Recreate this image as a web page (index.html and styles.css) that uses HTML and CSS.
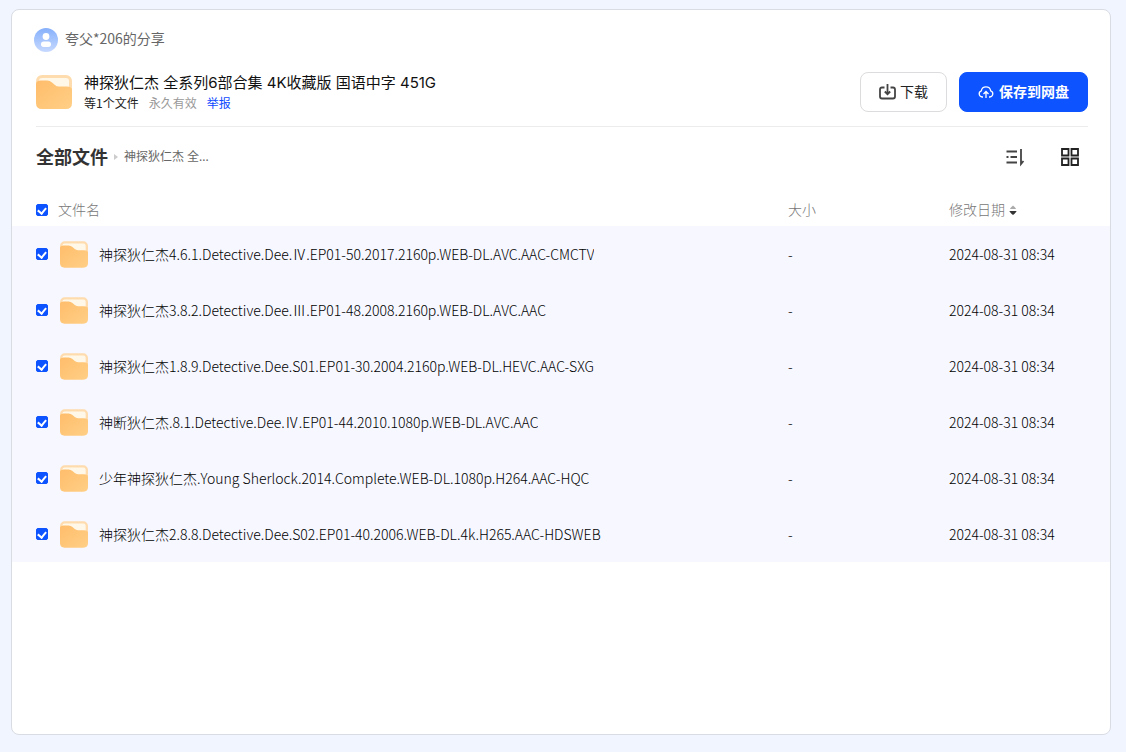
FILE: index.html
```html
<!DOCTYPE html>
<html lang="zh-CN">
<head>
<meta charset="utf-8">
<meta name="viewport" content="width=device-width, initial-scale=1">
<title>神探狄仁杰 全系列6部合集</title>
<link rel="stylesheet" href="styles.css">
</head>
<body>
<svg class="defs" width="0" height="0" aria-hidden="true">
  <defs>
    <linearGradient id="folder-front" x1="0" y1="0" x2="1" y2="1">
      <stop offset="0" stop-color="#ffbd6b"/>
      <stop offset="1" stop-color="#ffcf86"/>
    </linearGradient>
    <linearGradient id="avatar-fill" x1="0" y1="0" x2="0" y2="1">
      <stop offset="0" stop-color="#86b0fb"/>
      <stop offset="1" stop-color="#c6d9ff"/>
    </linearGradient>
    <symbol id="folder" viewBox="0 0 36 34">
      <rect width="36" height="30" rx="6" fill="#ffdcae"/>
      <rect x="3" y="3" width="30" height="18" rx="3" fill="#fff7e8"/>
      <path d="M0 9Q0 5.500 5 5.500H11Q14 5.500 16 7.500L19 10Q20.500 11.500 23 11.500H31Q36 11.500 36 15V28Q36 34 30 34H6Q0 34 0 28Z" fill="url(#folder-front)"/>
    </symbol>
  </defs>
</svg>
<main class="card">
  <header class="head">
    <div class="owner">
      <svg class="avatar" viewBox="0 0 24 24" aria-hidden="true">
        <circle cx="12" cy="12" r="12" fill="url(#avatar-fill)"/>
        <circle cx="12" cy="8.500" r="3.400" fill="#fff"/>
        <rect x="7" y="13.500" width="10" height="5.500" rx="2.700" fill="#fff"/>
      </svg>
      <span class="owner-name">夸父*206的分享</span>
    </div>
    <div class="share">
      <svg class="share-icon" aria-hidden="true"><use href="#folder"/></svg>
      <div class="share-info">
        <h1 class="title">神探狄仁杰 全系列6部合集 4K收藏版 国语中字 451G</h1>
        <p class="meta"><span>等1个文件</span><span class="muted">永久有效</span><a class="report" href="#">举报</a></p>
      </div>
      <div class="actions">
        <button class="btn" type="button">
          <svg width="17" height="18" viewBox="0 0 17 18" fill="none" stroke="#444" stroke-width="1.800" aria-hidden="true"><path d="M5.500 4.500H3Q1 4.500 1 6.500V13.500Q1 15.500 3 15.500H14Q16 15.500 16 13.500V6.500Q16 4.500 14 4.500H11.500M8.500 1V11M5.800 8.500L8.500 11.200L11.200 8.500"/></svg>
          下载
        </button>
        <button class="btn primary" type="button">
          <svg width="16" height="16" viewBox="0 0 16 16" fill="none" stroke="#fff" stroke-width="1.300" aria-hidden="true"><path d="M5 13H4.200A3.200 3.200 0 0 1 3.300 6.800A4.800 4.800 0 0 1 12.700 6.800A3.200 3.200 0 0 1 11.800 13H11M8 14V7.800M5.500 10L8 7.500L10.500 10"/></svg>
          保存到网盘
        </button>
      </div>
    </div>
  </header>
  <div class="toolbar">
    <nav class="crumbs">
      <a class="crumb-root" href="#">全部文件</a>
      <svg width="4" height="6" viewBox="0 0 4 6" aria-hidden="true"><path d="M0 0L4 3L0 6Z" fill="#ccc"/></svg>
      <a class="crumb" href="#">神探狄仁杰 全...</a>
    </nav>
    <div class="tools">
      <button class="tool" type="button" aria-label="排序">
        <svg width="20" height="20" viewBox="0 0 20 20" fill="none" stroke="#444" stroke-width="1.800" aria-hidden="true"><path d="M1.500 4.500H12M1.500 10H3.500M5.500 10H12M1.500 15.500H12M16 2V17L18.500 14"/></svg>
      </button>
      <button class="tool" type="button" aria-label="网格视图">
        <svg width="20" height="20" viewBox="0 0 20 20" fill="none" stroke="#222" stroke-width="1.800" aria-hidden="true"><path d="M2 2H8.500V8.500H2ZM11.500 2H18V8.500H11.500ZM2 11.500H8.500V18H2ZM11.500 11.500H18V18H11.500Z"/></svg>
      </button>
    </div>
  </div>
  <table class="files">
    <colgroup><col><col class="col-meta"><col class="col-meta"></colgroup>
    <thead>
      <tr>
        <th><label class="cell"><input class="check" type="checkbox" checked>文件名</label></th>
        <th>大小</th>
        <th><button class="sort" type="button">修改日期<svg width="8" height="10" viewBox="0 0 8 10" aria-hidden="true"><path d="M1 4Q1 3 4 .5Q7 3 7 4Z" fill="#aaa"/><path d="M.5 6H7.500Q7.500 7 4 10Q.5 7 .5 6Z" fill="#333"/></svg></button></th>
      </tr>
    </thead>
    <tbody>
      <tr><td><label class="cell"><input class="check" type="checkbox" checked><svg class="file-icon" aria-hidden="true"><use href="#folder"/></svg><span class="name">神探狄仁杰4.6.1.Detective.Dee.Ⅳ.EP01-50.2017.2160p.WEB-DL.AVC.AAC-CMCTV</span></label></td><td>-</td><td>2024-08-31 08:34</td></tr>
      <tr><td><label class="cell"><input class="check" type="checkbox" checked><svg class="file-icon" aria-hidden="true"><use href="#folder"/></svg><span class="name">神探狄仁杰3.8.2.Detective.Dee.Ⅲ.EP01-48.2008.2160p.WEB-DL.AVC.AAC</span></label></td><td>-</td><td>2024-08-31 08:34</td></tr>
      <tr><td><label class="cell"><input class="check" type="checkbox" checked><svg class="file-icon" aria-hidden="true"><use href="#folder"/></svg><span class="name">神探狄仁杰1.8.9.Detective.Dee.S01.EP01-30.2004.2160p.WEB-DL.HEVC.AAC-SXG</span></label></td><td>-</td><td>2024-08-31 08:34</td></tr>
      <tr><td><label class="cell"><input class="check" type="checkbox" checked><svg class="file-icon" aria-hidden="true"><use href="#folder"/></svg><span class="name">神断狄仁杰.8.1.Detective.Dee.Ⅳ.EP01-44.2010.1080p.WEB-DL.AVC.AAC</span></label></td><td>-</td><td>2024-08-31 08:34</td></tr>
      <tr><td><label class="cell"><input class="check" type="checkbox" checked><svg class="file-icon" aria-hidden="true"><use href="#folder"/></svg><span class="name">少年神探狄仁杰.Young Sherlock.2014.Complete.WEB-DL.1080p.H264.AAC-HQC</span></label></td><td>-</td><td>2024-08-31 08:34</td></tr>
      <tr><td><label class="cell"><input class="check" type="checkbox" checked><svg class="file-icon" aria-hidden="true"><use href="#folder"/></svg><span class="name">神探狄仁杰2.8.8.Detective.Dee.S02.EP01-40.2006.WEB-DL.4k.H265.AAC-HDSWEB</span></label></td><td>-</td><td>2024-08-31 08:34</td></tr>
    </tbody>
  </table>
</main>
</body>
</html>
```
FILE: styles.css
```css
* { box-sizing: border-box; }

body {
  margin: 0;
  min-height: 100vh;
  padding: 9px 15px 17px 11px;
  display: flex;
  background: #f1f5ff;
  color: #222;
  font: 14px/20px "Noto Sans", "Noto Sans CJK SC", sans-serif;
}

button { font: inherit; cursor: pointer; }
a { text-decoration: none; color: inherit; }
svg { display: block; flex: none; }
.defs { position: absolute; }

.card {
  flex: 1;
  min-width: 0;
  border: 1px solid #d9dce3;
  border-radius: 8px;
  background: #fff;
}

.head {
  margin: 0 22px 0 24px;
  padding: 18px 0 14px;
  border-bottom: 1px solid #ececee;
}

.owner {
  display: flex;
  align-items: center;
  gap: 7px;
  margin-left: -2px;
  color: #666;
  font-family: "Noto Sans CJK SC", sans-serif;
}

.avatar { width: 24px; height: 24px; }
.owner-name { padding-bottom: 4px; }

.share {
  display: flex;
  align-items: center;
  margin-top: 20px;
}

.share-icon { width: 36px; height: 34px; }

.share-info {
  flex: 1;
  min-width: 0;
  padding-left: 12px;
}

.title {
  margin: 0;
  font-family: Inter, "Noto Sans CJK SC", sans-serif;
  font-size: 15px;
  font-weight: 400;
  line-height: 22px;
  color: #111;
}

.meta {
  display: flex;
  gap: 10px;
  margin: 0;
  font-family: "Noto Sans CJK SC", sans-serif;
  font-size: 12px;
  line-height: 18px;
}

.muted { color: #999; }
.report { color: #0d4bff; }

.actions { display: flex; gap: 12px; }

.btn {
  display: flex;
  align-items: center;
  gap: 4px;
  height: 40px;
  padding: 0 18px;
  border: 1px solid #dcdcdf;
  border-radius: 8px;
  background: #fff;
  color: #222;
}

.primary {
  gap: 5px;
  border-color: #0d53ff;
  background: #0d53ff;
  color: #fff;
  font-weight: 700;
}

.toolbar {
  display: flex;
  align-items: center;
  justify-content: space-between;
  height: 67px;
  padding: 0 30px 7px 24px;
}

.crumbs {
  display: flex;
  align-items: center;
  gap: 6px;
  font-size: 12px;
  color: #666;
}

.crumb-root {
  font-size: 18px;
  font-weight: 700;
  color: #333;
}

.tools { display: flex; gap: 35px; }

.tool {
  padding: 0;
  border: 0;
  background: none;
}

.files {
  width: 100%;
  border-collapse: collapse;
  table-layout: fixed;
}

.col-meta { width: 161px; }

th, td { padding: 0; text-align: left; }

th {
  height: 32px;
  font-weight: 300;
  color: #777;
}

td {
  height: 56px;
  background: #f6f7ff;
  font-family: "Noto Sans CJK SC", sans-serif;
  font-weight: 300;
  color: #000;
}

.cell {
  display: flex;
  align-items: center;
  padding-left: 24px;
}

.check {
  appearance: none;
  flex: none;
  display: grid;
  place-items: center;
  width: 12px;
  height: 12px;
  margin: 0 10px 0 0;
  border: 1px solid #0d53ff;
  border-radius: 2px;
  background: #fff;
}

.check:checked { background: #0d53ff; }

.check:checked::after {
  content: "";
  width: 4px;
  height: 6px;
  margin-bottom: 1px;
  border: solid #fff;
  border-width: 0 2px 2px 0;
  transform: rotate(40deg);
}

td .check { margin-right: 12px; }

.file-icon {
  width: 28px;
  height: 27px;
  margin-right: 11px;
}

.name {
  overflow: hidden;
  white-space: nowrap;
  text-overflow: ellipsis;
}

.sort {
  display: flex;
  align-items: center;
  gap: 4px;
  padding: 0;
  border: 0;
  background: none;
  color: inherit;
}
```
